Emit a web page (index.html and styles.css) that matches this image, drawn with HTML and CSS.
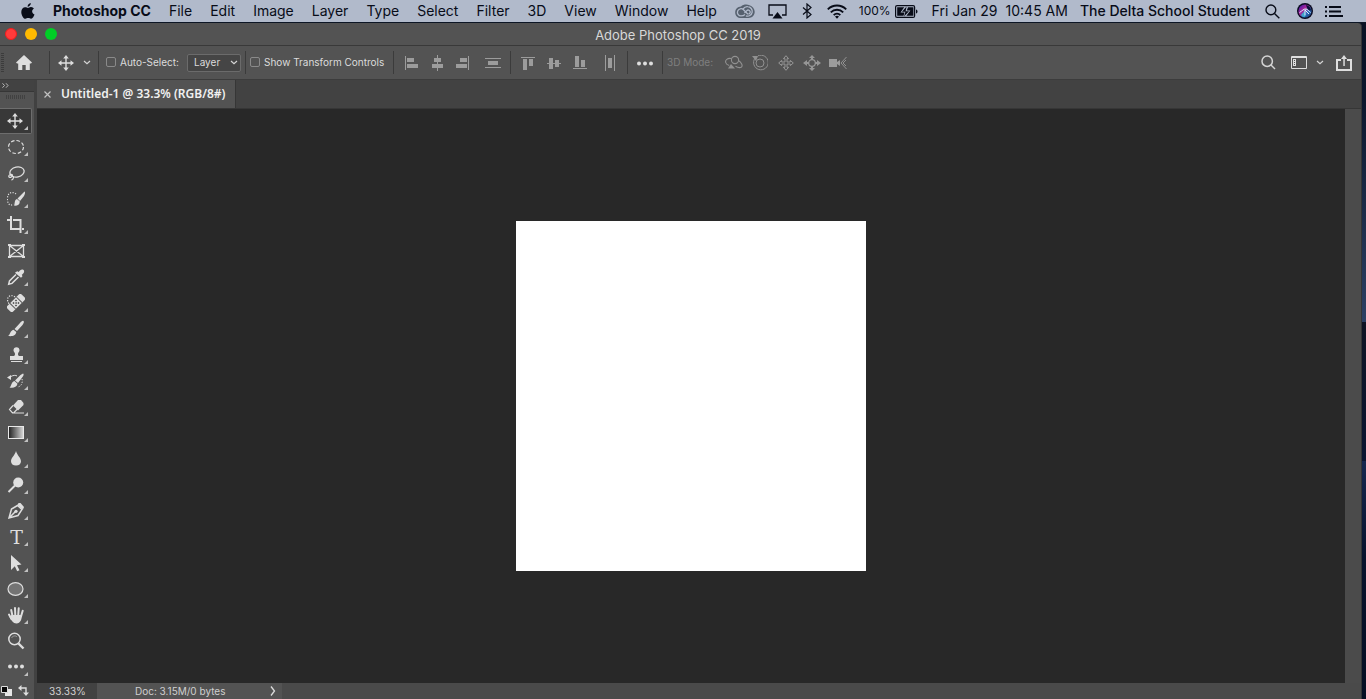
FILE: index.html
```html
<!DOCTYPE html>
<html lang="en">
<head>
<meta charset="utf-8">
<title>Adobe Photoshop CC 2019</title>
<link rel="stylesheet" href="styles.css">
</head>
<body>
<header class="menubar">
  <nav class="menus" aria-label="Application menu">
    <button class="apple" aria-label="Apple menu"><svg width="14" height="17" viewBox="0 0 14 17"><path fill="currentColor" d="M9.800 0c.1 1.900-1.500 3.700-3.200 3.700C6.400 2 8.100.2 9.800 0zM7 4.900c.6 0 1.700-.9 3.100-.8 1.200.1 2.200.6 2.800 1.500-2.600 1.600-2.100 5 .6 6-.5 1.500-1.900 4.100-3.400 4.200-1.100 0-1.500-.7-2.900-.7s-1.800.7-2.800.7C2.300 15.800.3 12 .3 9 .3 5.900 2.200 4.200 4.100 4.200 5.400 4.200 6.300 4.900 7 4.900z"/></svg></button>
    <button class="app-name">Photoshop CC</button>
    <button>File</button><button>Edit</button><button>Image</button><button>Layer</button><button>Type</button><button>Select</button><button>Filter</button><button>3D</button><button>View</button><button>Window</button><button>Help</button>
  </nav>
  <div class="status">
    <svg class="cloud" width="20" height="15" viewBox="0 0 20 15"><path fill="#56616f" d="M6 2.500C8 .3 12 0 14.500 1.200c3 1 5.200 3.500 5.200 6.600 0 3.600-2.700 6.200-6.200 6.200H6c-3.400 0-5.800-2.400-5.800-5.600C.2 5 2.800 2.600 6 2.500z"/><g fill="none" stroke="#b1bacb" stroke-width="1.300"><path d="M10 10.500c-1.400 1.300-2.500 1.400-4 1.400a3.600 3.600 0 1 1 2.500-6.200l4.500 4.500"/><path d="M8 5c1.300-1.700 3-2.500 4.700-2.300a4.700 4.700 0 1 1-1.800 9.100M9.500 9l2.300-2.400a2 2 0 1 1 1.600 3.400"/></g></svg>
    <svg class="airplay" width="19" height="15" viewBox="0 0 19 15"><path fill="none" stroke="currentColor" stroke-width="1.300" d="M5 11H1V1h17v10h-4"/><path fill="currentColor" d="M9.500 8l5 6.500h-10z"/></svg>
    <svg class="bluetooth" width="10" height="16" viewBox="0 0 10 16"><path fill="none" stroke="currentColor" stroke-width="1.200" d="M1 4.500l8 7L5 15V1l4 3.500-8 7"/></svg>
    <svg class="wifi" width="20" height="15" viewBox="0 0 20 15"><g fill="none" stroke="currentColor" stroke-width="1.900"><path d="M.8 5.300a13 13 0 0 1 18.400 0M3.800 8.300a8.800 8.800 0 0 1 12.400 0M6.700 11.100a4.700 4.700 0 0 1 6.600 0"/></g><path fill="currentColor" d="M10 14.800l-2-2.200a3 3 0 0 1 4 0z"/></svg>
    <span class="charge">100%</span>
    <svg class="battery" width="23" height="13" viewBox="0 0 23 13"><rect x=".6" y=".6" width="19" height="11.800" rx="1.500" fill="none" stroke="currentColor" stroke-width="1.200"/><path fill="currentColor" d="M2.200 2.200h7L5.500 7.500h4l-1 3.300H2.200zM13 2.200h5.400v8.600h-7l4-5.300h-3.600zM21 4.500c2 .5 2 3.500 0 4zM11.600 1.600L7 6.800h3.400L9 11.400l5-5.200h-3.400z"/></svg>
    <span class="date">Fri Jan 29</span>
    <span class="time">10:45 AM</span>
    <span class="user">The Delta School Student</span>
    <button class="spotlight" aria-label="Spotlight"><svg width="15" height="15" viewBox="0 0 15 15"><g fill="none" stroke="currentColor" stroke-width="1.400"><circle cx="5.900" cy="5.900" r="4.900"/><path d="M9.500 9.500l4.800 4.800"/></g></svg></button>
    <button class="siri" aria-label="Siri"><svg width="16" height="16" viewBox="0 0 16 16"><defs><linearGradient id="siri-glow" x1="0" y1="0" x2="1" y2="1"><stop offset=".1" stop-color="#4a1fa8"/><stop offset=".4" stop-color="#b0249a"/><stop offset=".65" stop-color="#2f6fc0"/><stop offset="1" stop-color="#18305e"/></linearGradient></defs><circle cx="8" cy="8" r="8" fill="#0a0a20"/><circle cx="8" cy="8" r="6.600" fill="url(#siri-glow)"/><path fill="#37c5d5" d="M8 7.500L4 12C5 13.500 7 14.500 8 14z" opacity=".7"/><path d="M2.500 9.500C5 8 7 5.500 9 6c1.500.3 3 2 4.500 3.500M8 6.500v6M8 7l4 4" fill="none" stroke="#d9f3ff"/><path d="M9 2c3 .5 5 3 5 5.500-3 0-4-2-5-5.500z" fill="#0b1138"/></svg></button>
    <button class="notify" aria-label="Notification Center"><svg width="18" height="11" viewBox="0 0 18 11"><path stroke="currentColor" stroke-width="2" d="M0 1h2m2 0h12M0 5.500h2m2 0h12M0 10h2m2 0h14"/></svg></button>
  </div>
</header>

<main class="window">
  <div class="titlebar">
    <div class="lights"><button class="light red" aria-label="Close"></button><button class="light yellow" aria-label="Minimize"></button><button class="light green" aria-label="Zoom"></button></div>
    <h1>Adobe Photoshop CC 2019</h1>
  </div>

  <div class="options">
    <div class="home-group"><span class="grip"></span><button aria-label="Home"><svg width="16" height="15" viewBox="0 0 16 15"><path fill="#dedede" d="M8 0l8 7.500-1 1h-1.200V15H9.700v-5H6.300v5H2.200V8.500H1l-1-1z"/></svg></button></div>
    <div class="group move-group">
      <button aria-label="Move tool"><svg width="16" height="16" viewBox="0 0 16 16"><use href="#move"/></svg></button>
      <button class="slim" aria-label="Tool presets"><svg width="8" height="5" viewBox="0 0 8 5"><use href="#chevron"/></svg></button>
    </div>
    <div class="group select-group">
      <label><input type="checkbox">Auto-Select:</label>
      <div class="picker"><select aria-label="Auto-select target"><option>Layer</option><option>Group</option></select><svg width="8" height="5" viewBox="0 0 8 5"><use href="#chevron"/></svg></div>
    </div>
    <div class="group transform-group"><label><input type="checkbox">Show Transform Controls</label></div>
    <div class="group aligns">
      <button aria-label="Align left edges"><svg width="16" height="16" viewBox="0 0 16 16"><path d="M2 1h1v14H2zM4 3h7v4H4zM4 9h11v4H4z"/></svg></button>
      <button aria-label="Align horizontal centers"><svg width="16" height="16" viewBox="0 0 16 16"><path d="M8 0h1v16H8zM5 3h7v4H5zM3 9h11v4H3z"/></svg></button>
      <button aria-label="Align right edges"><svg width="16" height="16" viewBox="0 0 16 16"><path d="M13 1h1v14h-1zM5 3h7v4H5zM1 9h11v4H1z"/></svg></button>
      <button class="spaced" aria-label="Distribute vertically"><svg width="16" height="16" viewBox="0 0 16 16"><path d="M0 3h16v1H0zM3 6h10v4H3zM0 12h16v1H0z"/></svg></button>
    </div>
    <div class="group aligns">
      <button aria-label="Align top edges"><svg width="16" height="16" viewBox="0 0 16 16"><path d="M1 2h14v1H1zM3 4h4v11H3zM9 4h4v7H9z"/></svg></button>
      <button aria-label="Align vertical centers"><svg width="16" height="16" viewBox="0 0 16 16"><path d="M1 8h14v1H1zM3 3h4v11H3zM9 5h4v7H9z"/></svg></button>
      <button aria-label="Align bottom edges"><svg width="16" height="16" viewBox="0 0 16 16"><path d="M1 13h14v1H1zM3 1h4v11H3zM9 5h4v7H9z"/></svg></button>
      <button class="spaced" aria-label="Distribute horizontally"><svg width="16" height="16" viewBox="0 0 16 16"><path d="M3 0h1v16H3zM6 3h4v10H6zM12 0h1v16h-1z"/></svg></button>
    </div>
    <div class="group"><button aria-label="More options"><svg width="16" height="16" viewBox="0 0 16 16"><use href="#dots"/></svg></button></div>
    <div class="group modes">
      <span class="mode-label">3D Mode:</span>
      <button aria-label="Orbit"><svg width="18" height="16" viewBox="0 0 18 16"><g fill="none" stroke="#919191" stroke-width="1.100"><circle cx="10" cy="5" r="3.600"/><path d="M6 3.500C2.500 3 0 5 .7 7.500c.3 1.500 2 2.500 3.500 3M13.500 5.500c3 2 4.500 5 3 6.500-1.500 1-4 .5-6-.7"/></g><path fill="#919191" d="M3 13.500h7L6 9z"/></svg></button>
      <button aria-label="Roll"><svg width="16" height="16" viewBox="0 0 16 16"><g fill="none" stroke="#919191"><circle cx="8" cy="8" r="4"/><path d="M3 3.200A7.300 7.300 0 1 0 6 .8"/></g><path fill="#919191" d="M0 1h6L4 6z"/></svg></button>
      <button aria-label="Pan"><svg width="16" height="16" viewBox="0 0 16 16"><path fill="none" stroke="#969696" d="M8 .7l2.600 3H9v3.300h3.300V5.400l3 2.600-3 2.600V9H9v3.300h1.600L8 15.300l-2.600-3H7V9H3.700v1.600L.7 8l3-2.600V7H7V3.700H5.400z"/></svg></button>
      <button aria-label="Slide"><svg width="18" height="16" viewBox="0 0 18 16"><circle cx="9" cy="8" r="3.300" fill="none" stroke="#969696" stroke-width="1.200"/><path fill="#969696" d="M9 0l3 3h-2v2H8V3H6zM9 16l-3-3h2v-2h2v2h2zM0 8l4-3v2h2v2H4v2zM18 8l-4-3v2h-2v2h2v2z"/></svg></button>
      <button aria-label="3D camera"><svg width="18" height="12" viewBox="0 0 18 12"><path fill="#9c9c9c" d="M0 2h8v8H0zM8 5l3-2v6L8 7z"/><path fill="none" stroke="#919191" d="M17.500 0L12 6l5.500 6M17 3l-3 3 3 3"/></svg></button>
    </div>
    <div class="right-tools">
      <button aria-label="Search"><svg width="15" height="15" viewBox="0 0 15 15"><g fill="none" stroke="#d5d5d5" stroke-width="1.500"><circle cx="6.200" cy="6.200" r="5.200"/><path d="M10 10l4 4"/></g></svg></button>
      <button class="workspace" aria-label="Workspace"><svg width="16" height="13" viewBox="0 0 16 13"><path fill="none" stroke="#dedede" d="M.5.500h15v12H.5zM.5 1.500h15"/><path fill="#dedede" d="M2 3h3v7H2z"/><path fill="#555" d="M3 4h1v1H3zM3 6h1v1H3zM3 8h1v1H3z"/></svg></button>
      <button class="slim" aria-label="Workspace menu"><svg width="8" height="5" viewBox="0 0 8 5"><use href="#chevron"/></svg></button>
      <button aria-label="Share"><svg width="16" height="16" viewBox="0 0 16 16"><path fill="none" stroke="#dedede" stroke-width="2" d="M5 5H1v10h14V5h-4"/><path fill="#dedede" d="M7.300 11h1.500V4H11L8 0 5 4h2.300z"/></svg></button>
    </div>
  </div>

  <div class="workspace-body">
    <aside class="toolbox">
      <button class="expand" aria-label="Expand tools"><svg width="7" height="5" viewBox="0 0 7 5"><path fill="none" stroke="#b8b8b8" d="M.5.300l2 2.200-2 2.200M4 .3l2 2.200-2 2.200"/></svg></button>
      <span class="tool-grip"></span>
      <div class="tools">
        <button class="tool active more" aria-label="Move"><svg viewBox="0 0 18 18"><g transform="translate(0 1)"><use href="#move" width="16" height="16"/></g></svg></button>
        <button class="tool more" aria-label="Elliptical marquee"><svg viewBox="0 0 18 18"><ellipse cx="9" cy="9" rx="7.500" ry="6.500" fill="none" stroke="#dedede" stroke-width="1.200" stroke-dasharray="3.500 2"/></svg></button>
        <button class="tool more" aria-label="Lasso"><svg viewBox="0 0 18 18"><g fill="none" stroke="#dedede" stroke-width="1.300"><ellipse cx="10" cy="8" rx="7.200" ry="5" transform="rotate(-12 10 8)"/><path d="M3.500 10.500c-3 1-1.500 4 .8 2.500s1-2.800-.8-2.500zM5 12c2 0 2 3.500-.5 4"/></g></svg></button>
        <button class="tool more" aria-label="Quick selection"><svg viewBox="0 0 18 18"><path fill="none" stroke="#dedede" stroke-width="1.200" stroke-dasharray="1.200 1.400" d="M9 4C7 2 3 2 1.500 4.500S0 11 1.500 13.500s3.500 1.500 5 .5"/><path fill="#dedede" d="M17.500 1.500c1 .5.500 2.500-.5 4.500l-4 5-2.500-2.500zM10 9l2.800 2.600c0 3.500-3 4.500-6 4 1.500-1 0-5.500 3.200-6.600z"/></svg></button>
        <button class="tool more" aria-label="Crop"><svg viewBox="0 0 18 18"><path fill="none" stroke="#dedede" stroke-width="2" d="M4 0v13h8.500M-1 4h4.500M6 4h7.500v13M15 13h2"/></svg></button>
        <button class="tool" aria-label="Frame"><svg viewBox="0 0 18 18"><path fill="none" stroke="#dedede" stroke-width="1.300" d="M2.500 3.500h14v11h-14zM2.500 3.500l14 11M16.500 3.500l-14 11"/><path fill="#dedede" d="M1 2h3v2H1zM15 2h3v2h-3zM1 14h3v2H1zM15 14h3v2h-3z"/></svg></button>
        <button class="tool more" aria-label="Eyedropper"><svg viewBox="0 0 18 18"><path fill="none" stroke="#dedede" stroke-width="1.500" d="M9 6.500L2.500 13l-.8 3.200 3.300-.8L11.500 9"/><path fill="#dedede" d="M9 4l1.300-.8 1.500.8c1-2 3-3.300 4.500-2.200 1.700 1.200.7 3.700-1.500 5l.7 1.500-1.500 1.500-6-5z"/></svg></button>
        <button class="tool more" aria-label="Spot healing brush"><svg viewBox="0 0 18 18"><path fill="none" stroke="#dedede" stroke-width="1.200" stroke-dasharray="1.200 1.400" d="M8 3C4-.2-.5 2.500.8 7.500L2 10"/><g transform="rotate(-45 9 9)"><rect x="-1" y="5" width="20" height="8" rx="2" fill="#dedede"/><path stroke="#555" d="M4.500 5v8M13.500 5v8"/><path fill="#444" d="M6.500 6.500H8V8H6.500zM10 6.500h1.500V8H10zM6.500 10H8v1.500H6.500zM10 10h1.500v1.500H10zM8.300 8.300h1.500v1.500H8.300z"/></g></svg></button>
        <button class="tool more" aria-label="Brush"><svg viewBox="0 0 18 18"><path fill="#dedede" d="M16.500 1c1 .8 0 2.500-1 4l-5.500 6-2.500-2L13 3c1.500-1.500 2.500-2.700 3.500-2zM6.500 9.700L9.300 12c-.5 4-4.500 4.500-8.300 4 2.300-1.300 2-5.300 5.500-6.300z"/></svg></button>
        <button class="tool more" aria-label="Clone stamp"><svg viewBox="0 0 18 18"><path fill="#dedede" d="M6.500 4.500C6 0 13 0 12.500 4.500c-.2 1.500-1.500 2-1.500 3.500 0 1.500.5 2 2 2h3v4H3v-4h3c1.500 0 2-.5 2-2 0-1.500-1.300-2-1.500-3.500zM4 15h11v1H4z"/></svg></button>
        <button class="tool more" aria-label="History brush"><svg viewBox="0 0 18 18"><path fill="#dedede" d="M16 1.500c1.200.5.500 2-.5 3.500l-4.500 6L8 8.500 13.500 3zM7.500 9l3 2.800c-1 4-4.500 4.200-8 3.700C4.500 14.500 4 10 7.500 9zM0 5.500L4 3v5z"/><path fill="none" stroke="#dedede" d="M3 5c3-2 6-2 7-1"/><path fill="none" stroke="#dedede" stroke-dasharray="1.200 1.500" d="M15 7c1 4-1 8-5 8"/></svg></button>
        <button class="tool more" aria-label="Eraser"><svg viewBox="0 0 18 18"><path fill="none" stroke="#dedede" stroke-width="1.200" d="M6 7.500l-3.500 4 3 3.500H17M5 15l2-.5 4-4"/><path fill="#dedede" d="M11 2h3l2.500 3v2L11 12.500 6 7.500z"/></svg></button>
        <button class="tool more" aria-label="Gradient"><svg viewBox="0 0 18 18"><defs><linearGradient id="ramp"><stop stop-color="#1e1e1e"/><stop offset="1" stop-color="#dadada"/></linearGradient></defs><rect x="1.500" y="2.500" width="15" height="12" fill="url(#ramp)" stroke="#e8e8e8"/></svg></button>
        <button class="tool more" aria-label="Blur"><svg viewBox="0 0 18 18"><path fill="#dedede" d="M9 1c1 4 5 7 5 10.200 0 2.800-2 4.300-5 4.300s-5-1.500-5-4.300C4 8 8 5 9 1z"/></svg></button>
        <button class="tool more" aria-label="Dodge"><svg viewBox="0 0 18 18"><circle cx="11.200" cy="6.500" r="5" fill="#dedede"/><path stroke="#dedede" stroke-width="2" d="M8 9.500L1.500 16"/></svg></button>
        <button class="tool more" aria-label="Pen"><svg viewBox="0 0 18 18"><path fill="none" stroke="#dedede" stroke-width="1.500" d="M10.500 3.500L4.500 7 2 16l9-2.500 4-6zM2.500 15.500l6-6"/><circle cx="9" cy="9.300" r="1.600" fill="#dedede"/><path fill="#dedede" d="M11.500 1h2L17 5l-1 2.500-5.500-4.500z"/></svg></button>
        <button class="tool more type-tool" aria-label="Horizontal type">T</button>
        <button class="tool more" aria-label="Path selection"><svg viewBox="0 0 18 18"><path fill="#dedede" d="M4 1l10.500 9.500-4.500.7 2.500 5-2.300 1-2.400-5L4 16z"/></svg></button>
        <button class="tool more" aria-label="Ellipse"><svg viewBox="0 0 18 18"><ellipse cx="8.500" cy="9" rx="7.500" ry="6.300" fill="#747474" stroke="#dedede" stroke-width="1.200"/></svg></button>
        <button class="tool more" aria-label="Hand"><svg viewBox="0 0 18 18"><path fill="none" stroke="#dedede" stroke-width="2" stroke-linecap="round" d="M5.500 10L4.200 4M8.300 9.500L8 2M11.200 9.500l.5-7.200M14 10.500l1.700-5.800M4.500 13L2 8.500"/><path fill="#dedede" d="M4.500 9h10.300c.2 4-1.300 8.500-5.300 8.500C6 17.500 4.500 14.500 2.500 11z"/></svg></button>
        <button class="tool" aria-label="Zoom"><svg viewBox="0 0 18 18"><circle cx="7.500" cy="7" r="5.700" fill="none" stroke="#dedede" stroke-width="1.500"/><path stroke="#dedede" stroke-width="2.400" d="M11.500 11.500l5 5"/><path fill="none" stroke="#a0a0a0" d="M4.500 6c1-2 4-3 5.500-1"/></svg></button>
        <button class="tool more" aria-label="Edit toolbar"><svg viewBox="0 0 18 18"><use href="#dots" x="1" width="16" height="16"/></svg></button>
      </div>
      <div class="colors">
        <button aria-label="Default colors"><svg width="11" height="10" viewBox="0 0 11 10"><path fill="#e6e6e6" d="M4 3h7v7H4z"/><path fill="#080808" stroke="#ddd" d="M.5.500h6v6h-6z"/></svg></button>
        <button aria-label="Swap colors"><svg width="11" height="11" viewBox="0 0 11 11"><path fill="none" stroke="#dedede" stroke-width="1.400" d="M2 3h6v6"/><path fill="#dedede" d="M0 3l3.500-3v6zM8 11L5 7.500h6z"/></svg></button>
      </div>
    </aside>

    <section class="document">
      <div class="tabs"><div class="tab"><button aria-label="Close document"><svg width="7" height="7" viewBox="0 0 7 7"><path stroke="#c2c2c2" stroke-width="1.200" d="M.5.500l6 6M6.500.500l-6 6"/></svg></button><span>Untitled-1 @ 33.3% (RGB/8#)</span></div></div>
      <div class="view"><div class="pasteboard"><div class="artboard"></div></div><div class="scroll-track"></div></div>
      <footer class="docbar"><input type="text" value="33.33%" aria-label="Zoom level"><div class="docinfo"><span>Doc: 3.15M/0 bytes</span><button aria-label="Document info menu"><svg width="6" height="10" viewBox="0 0 6 10"><path fill="none" stroke="#dcdcdc" stroke-width="1.300" d="M1 .5L4.500 5 1 9.500"/></svg></button></div></footer>
    </section>
  </div>
</main>

<svg class="defs" aria-hidden="true">
  <symbol id="move" viewBox="0 0 16 16"><path fill="#dedede" d="M8 0l2.800 3.500H8.700v3.800h3.800V5.200L16 8l-3.500 2.800V8.700H8.700v3.800h2.100L8 16l-2.800-3.500h2.100V8.700H3.500v2.100L0 8l3.500-2.800v2.100h3.800V3.500H5.200z"/></symbol>
  <symbol id="chevron" viewBox="0 0 8 5"><path fill="none" stroke="#d5d5d5" stroke-width="1.200" d="M1 1l3 2.600L7 1"/></symbol>
  <symbol id="dots" viewBox="0 0 16 16"><g fill="#dedede"><circle cx="2" cy="8.500" r="2"/><circle cx="8" cy="8.500" r="2"/><circle cx="14" cy="8.500" r="2"/></g></symbol>
</svg>
</body>
</html>
```

FILE: styles.css
```css
* { box-sizing: border-box; }

body {
  margin: 0;
  height: 100vh;
  overflow: hidden;
  display: flex;
  flex-direction: column;
  background: linear-gradient(#071021 0, #0b162c 14%, #2c4064 46%, #0f1424 46%, #0a1531 66%, #15274f 66%, #07122c 80%, #050e22);
  font-family: Inter, "Liberation Sans", sans-serif;
  color: #dcdcdc;
}

button {
  margin: 0;
  padding: 0;
  border: 0;
  background: none;
  color: inherit;
  font: inherit;
  display: flex;
  align-items: center;
  justify-content: center;
}

svg { display: block; flex: none; }
.defs { position: absolute; width: 0; height: 0; }

/* System menu bar */
.menubar {
  flex: none;
  height: 23px;
  display: flex;
  justify-content: space-between;
  background: #b1bacb;
  border-bottom: 1px solid #0d1625;
  color: #080c18;
  font-size: 14px;
  line-height: 22px;
  white-space: nowrap;
}
.menus { display: flex; gap: 18px; padding-left: 21px; }
.app-name { font-weight: 700; }
.status { display: flex; align-items: center; padding-right: 23px; }
.airplay { margin-left: 13px; }
.bluetooth { margin-left: 15px; }
.wifi { margin-left: 15px; }
.charge { margin-left: 12px; font-size: 12px; }
.battery { margin-left: 4px; }
.date { margin-left: 14px; }
.time { margin-left: 8px; }
.user { margin-left: 12px; font-weight: 500; }
.spotlight { margin-left: 15px; }
.siri { margin-left: 17px; }
.notify { margin-left: 12px; }

/* Window frame */
.window {
  flex: 1;
  min-height: 0;
  margin-right: 4px;
  display: flex;
  flex-direction: column;
  background: #535353;
  border-right: 1px solid #353535;
  border-top-right-radius: 4px;
}
.titlebar {
  flex: none;
  height: 23px;
  display: grid;
  grid-template-columns: 1fr auto 1fr;
  align-items: center;
  padding-right: 5px;
  border-bottom: 1px solid #393939;
}
.titlebar h1 { margin: 0; padding-top: 2px; font-size: 13px; line-height: 18px; font-weight: 400; color: #d8d8d8; }
.lights { display: flex; gap: 8px; padding-left: 5px; }
.light { width: 12px; height: 12px; border-radius: 50%; }
.red { background: #ff3b3b; border: 1px solid #f31c1c; }
.yellow { background: #ffba00; }
.green { background: #00ce26; }

/* Options bar */
.options {
  flex: none;
  height: 34px;
  display: flex;
  align-items: center;
  border-bottom: 1px solid #3c3c3c;
  font-size: 10px;
  white-space: nowrap;
}
.options button { width: 26px; height: 24px; }
.options .slim { width: 16px; }
.home-group { display: flex; align-items: center; width: 49px; }
.grip { width: 3px; height: 20px; margin-right: 7px; margin-left: 1px; background: repeating-linear-gradient(#3c3c3c 0 1px, transparent 1px 2px); }
.group { height: 23px; padding: 0 4px; display: flex; align-items: center; border-left: 1px solid #3b3b3b; }
.move-group { padding-left: 3px; padding-right: 2px; width: 49px; }
.select-group { width: 147px; padding-left: 7px; justify-content: space-between; }
.transform-group { width: 148px; }
.options label { display: flex; align-items: center; gap: 4px; padding-bottom: 1px; }
.options input {
  appearance: none;
  width: 10px;
  height: 10px;
  margin: 0;
  border: 1px solid #8a8a8a;
  border-radius: 2px;
}
.picker { display: grid; align-items: center; width: 54px; }
.picker select, .picker svg { grid-area: 1 / 1; }
.picker svg { justify-self: end; margin-right: 3px; pointer-events: none; }
.picker select {
  appearance: none;
  width: 100%;
  height: 18px;
  padding: 0 0 1px 6px;
  color: #dcdcdc;
  background: #454545;
  border: 1px solid #6b6b6b;
  border-radius: 2px;
  font: inherit;
}
.aligns { fill: #9c9c9c; }
.spaced { margin-left: 4px; }
.mode-label { color: #7f7f7f; width: 54px; padding-bottom: 1px; }
.right-tools { margin-left: auto; display: flex; align-items: center; padding-right: 4px; }
.right-tools .workspace { margin-left: 5px; }
.right-tools button:last-child { margin-left: 3px; }

/* Tool column */
.workspace-body { flex: 1; min-height: 0; display: flex; }
.toolbox { flex: none; width: 37px; border-right: 3px solid #414141; display: flex; flex-direction: column; }
.expand { height: 12px; padding-left: 2px; justify-content: flex-start; background: #424242; border-bottom: 1px solid #363636; }
.tool-grip { width: 19px; height: 4px; margin: 3px 0 9px 6px; background: repeating-linear-gradient(90deg, #414141 0 1px, transparent 1px 2px); }
.tools { display: grid; grid-auto-rows: 26px; }
.tool { width: 32px; padding-left: 1px; position: relative; border: 1px solid transparent; border-left: 0; border-radius: 0 2px 2px 0; }
.tool svg { width: 18px; height: 18px; }
.active { background: #383838; border-color: #6d6d6d; }
.more::after { content: ""; position: absolute; right: 3px; bottom: 3px; border: 2px solid; border-color: transparent #c0c0c0 #c0c0c0 transparent; }
.type-tool { font: 19px/20px "DejaVu Serif", serif; color: #dedede; padding-left: 2px; }
.colors { display: flex; gap: 6px; padding: 5px 0 0 1px; }

/* Document */
.document { flex: 1; min-width: 0; display: flex; flex-direction: column; }
.tabs { flex: none; height: 29px; display: flex; background: #424242; border-bottom: 1px solid #363636; }
.tab { display: flex; align-items: center; gap: 10px; padding: 0 10px 0 7px; background: #535353; border-right: 1px solid #363636; font: 600 12px/16px "Noto Sans", sans-serif; color: #f0f0f0; white-space: nowrap; }
.view { flex: 1; min-height: 0; display: flex; }
.pasteboard { flex: 1; display: grid; place-items: center; background: #282828; }
.artboard { width: 350px; height: 350px; background: #fff; }
.scroll-track { width: 16px; background: #4b4b4b; }
.docbar { flex: none; height: 16px; display: flex; background: #4a4a4a; font-size: 10px; }
.docbar input { width: 60px; height: 16px; padding: 0 0 0 12px; border: 0; background: #424242; color: #d2d2d2; font: inherit; }
.docinfo { display: flex; align-items: center; justify-content: space-between; width: 185px; padding: 0 6px 0 38px; background: #535353; color: #cfcfcf; }
```
